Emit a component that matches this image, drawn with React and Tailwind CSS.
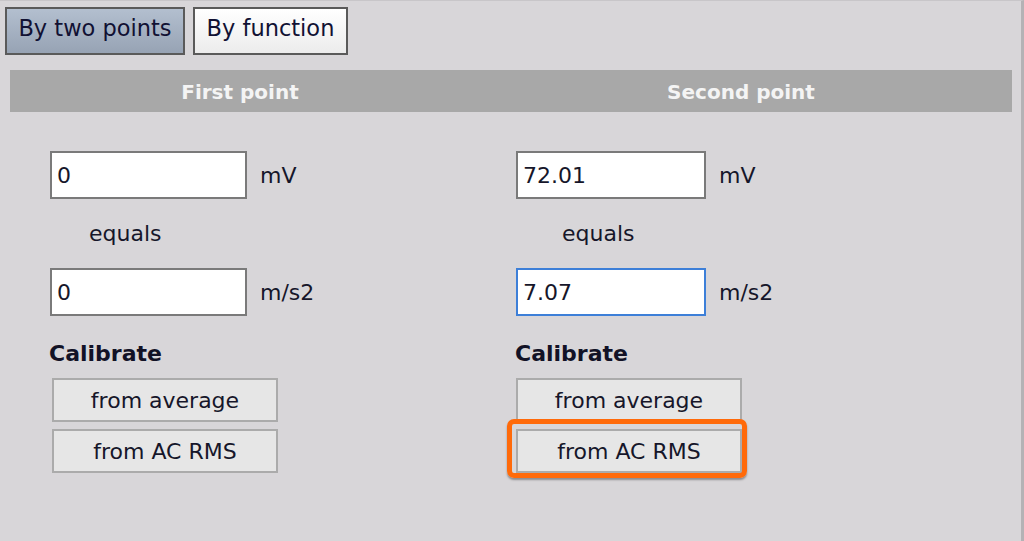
import React from "react";

const font = { fontFamily: '"DejaVu Sans", Tahoma, Verdana, sans-serif' };

const Field = ({ value, unit, focused, width }) => (
  <div className="flex items-center h-[48px]">
    <div
      className={
        "h-[48px] bg-white flex items-center pl-[5px] text-[22px] text-[#16162a] " +
        (focused ? "border-2 border-[#3d7fd8]" : "border-2 border-[#7a7a7a]")
      }
      style={{ width }}
    >
      {value}
    </div>
    <div className="ml-[13px] text-[22px] text-[#16162a]">{unit}</div>
  </div>
);

const CalButton = ({ label, highlight }) => {
  const btn = (
    <div className="h-[44px] w-[226px] bg-[#e6e6e6] border-2 border-[#ababab] flex items-center justify-center text-[22px] text-[#16162a]">
      {label}
    </div>
  );
  if (!highlight) return btn;
  return (
    <div className="relative">
      {btn}
      <div className="absolute -left-[9px] -top-[10px] w-[240px] h-[59px] border-[5px] border-[#ff6a0a] rounded-[7px] shadow-[0_2px_2px_rgba(0,0,0,0.35)]" />
    </div>
  );
};

const Column = ({ width, pad, equalsPad, inputWidth, buttonShift, first, second, focused, highlight }) => (
  <div className="flex flex-col" style={{ width }}>
    <div className="pt-[39px]" style={{ paddingLeft: pad }}>
      <Field value={first} unit="mV" width={inputWidth} />
      <div
        className="h-[69px] flex items-center text-[22px] text-[#16162a]"
        style={{ paddingLeft: equalsPad }}
      >
        equals
      </div>
      <Field value={second} unit="m/s2" focused={focused} width={inputWidth} />
      <div className="mt-[24px] -ml-[1px] text-[22px] font-bold text-[#121226] leading-[28px]">Calibrate</div>
      <div className="mt-[10px] flex flex-col gap-[7px]" style={{ marginLeft: buttonShift }}>
        <CalButton label="from average" />
        <CalButton label="from AC RMS" highlight={highlight} />
      </div>
    </div>
  </div>
);

export default function App() {
  return (
    <div
      className="w-[1024px] h-[541px] bg-[#d8d6d9] overflow-hidden border-r-[3px] border-[#b4b2b5] border-t border-t-[#c8c6c9]"
      style={font}
    >
      <div className="flex gap-[8px] pl-[5px] pt-[6px]">
        <div className="h-[48px] w-[180px] border-2 border-[#5a5a5a] bg-gradient-to-b from-[#b3bfcf] to-[#97a3b4] flex items-center justify-center pb-[4px] text-[22.5px] text-[#111133]">
          By two points
        </div>
        <div className="h-[48px] w-[155px] border-2 border-[#5a5a5a] bg-gradient-to-b from-white to-[#ececec] flex items-center justify-center pb-[4px] text-[22.5px] text-[#111133]">
          By function
        </div>
      </div>
      <div className="ml-[10px] mt-[15px] w-[1002px] h-[42px] bg-[#a8a8a8] flex pt-[2px] text-[20px] font-bold text-[#f4f4f4]">
        <div className="w-[460px] flex items-center justify-center">First point</div>
        <div className="flex-1 flex items-center justify-center">Second point</div>
      </div>
      <div className="flex ml-[10px]">
        <Column width={460} pad={40} equalsPad={39} inputWidth={197} buttonShift={2} first="0" second="0" />
        <Column width={542} pad={46} equalsPad={46} inputWidth={190} buttonShift={0} first="72.01" second="7.07" focused highlight />
      </div>
    </div>
  );
}
